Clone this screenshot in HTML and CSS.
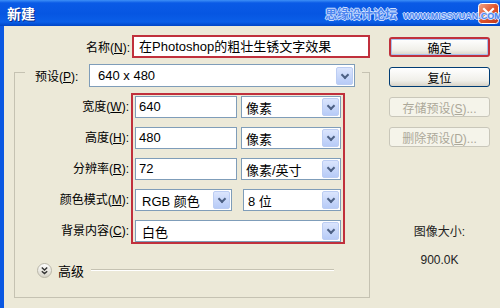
FILE: index.html
```html
<!DOCTYPE html>
<html>
<head>
	<title>新建</title>
	<meta charset="utf-8">
	<link rel="stylesheet" href="styles.css">
</head>
<body>

	<div class="window">
		<div class="titlebar">
			<span class="title">新建</span>
			<span class="close">
				<svg width="21" height="21" viewBox="0 0 21 21">
					<defs>
						<linearGradient id="cg" x1="0" y1="0" x2="1" y2="1">
							<stop offset="0" stop-color="#f0a68a"/>
							<stop offset="0.5" stop-color="#e0542c"/>
							<stop offset="1" stop-color="#c0391b"/>
						</linearGradient>
					</defs>
					<rect x="0.5" y="0.5" width="20" height="20" rx="3" fill="url(#cg)" stroke="#fff"/>
					<path d="M6 6 L15 15 M15 6 L6 15" stroke="#fff" stroke-width="2.2" stroke-linecap="square"/>
				</svg>
			</span>
			<span class="mark"><b>思缘设计论坛</b> <small>WWW.MISSYUAN.COM</small></span>
		</div>

		<div class="body">
			<div class="main">
				<div class="name-row">
					<label class="lbl">名称(<u>N</u>):</label>
					<div class="textbox name-box">在Photoshop的粗壮生锈文字效果</div>
				</div>

				<fieldset class="group">
					<legend>
						<div class="legend-inner">
							<label class="preset-lbl">预设(<u>P</u>):</label>
							<div class="combo preset"><span>640 x 480</span><i class="arrow"></i></div>
						</div>
					</legend>

					<div class="fields">
						<div class="labels">
							<label>宽度(<u>W</u>):</label>
							<label>高度(<u>H</u>):</label>
							<label>分辨率(<u>R</u>):</label>
							<label>颜色模式(<u>M</u>):</label>
							<label>背景内容(<u>C</u>):</label>
						</div>
						<div class="values">
							<div class="row">
								<div class="textbox num">640</div>
								<div class="combo unit"><span>像素</span><i class="arrow"></i></div>
							</div>
							<div class="row">
								<div class="textbox num">480</div>
								<div class="combo unit"><span>像素</span><i class="arrow"></i></div>
							</div>
							<div class="row">
								<div class="textbox num">72</div>
								<div class="combo unit"><span>像素/英寸</span><i class="arrow"></i></div>
							</div>
							<div class="row wide-gap">
								<div class="combo mode"><span>RGB 颜色</span><i class="arrow"></i></div>
								<div class="combo bits"><span>8 位</span><i class="arrow"></i></div>
							</div>
							<div class="row">
								<div class="combo full"><span>白色</span><i class="arrow"></i></div>
							</div>
						</div>
					</div>

					<div class="advanced">
						<span class="more">
							<svg width="15" height="15" viewBox="0 0 15 15">
								<defs>
									<linearGradient id="mg" x1="0" y1="0" x2="0" y2="1">
										<stop offset="0" stop-color="#ffffff"/>
										<stop offset="1" stop-color="#d6d3c6"/>
									</linearGradient>
								</defs>
								<circle cx="7.5" cy="7.5" r="7" fill="url(#mg)" stroke="#b9b6a8"/>
								<path d="M4.8 4.6 L7.5 7 L10.2 4.6 M4.8 8.2 L7.5 10.6 L10.2 8.2" fill="none" stroke="#333" stroke-width="1.4"/>
							</svg>
						</span>
						<span>高级</span>
						<div class="rule"></div>
					</div>
				</fieldset>
			</div>

			<div class="side">
				<button class="btn ok">确定</button>
				<button class="btn">复位</button>
				<button class="btn off">存储预设(<u>S</u>)...</button>
				<button class="btn off">删除预设(<u>D</u>)...</button>
				<div class="info">
					<p>图像大小:</p>
					<p>900.0K</p>
				</div>
			</div>
		</div>
	</div>

</body>
</html>
```

FILE: styles.css
```css
*{
	box-sizing: border-box;
}
html,body{
	width: 100%;
	height: 100%;
}
body{
	margin: 0px;
	background: #ECE9D8;
	font-family: "Liberation Sans", "Noto Sans CJK SC", sans-serif;
	font-size: 12px;
	color: #000;
	overflow: hidden;
}

.window{
	width: 500px;
	height: 308px;
	display: flex;
	flex-direction: column;
	background: #ECE9D8;
}

/* title bar */
.titlebar{
	height: 26px;
	flex: none;
	display: flex;
	align-items: center;
	padding-left: 7px;
	position: relative;
	background: linear-gradient(#3d8ff7 0px, #0a5ae6 3px, #0656e2 14px, #0a5fe8 22px, #0045c6 26px);
}

.title{
	color: #fff;
	font-weight: bold;
	font-size: 14px;
	font-family: "Noto Sans CJK SC", sans-serif;
	text-shadow: 1px 1px 0px #0b2c8c;
}

/* watermark drawn over the bar and the close box */
.mark{
	position: absolute;
	left: 325px;
	top: 5px;
	z-index: 2;
	color: #4d86f0;
	text-shadow: -1px 0 #cfe0ff, 1px 0 #cfe0ff, 0 -1px #cfe0ff, 0 1px #cfe0ff;
	white-space: nowrap;
}
.mark b{
	font-size: 12px;
	font-family: "Noto Sans CJK SC", sans-serif;
	font-weight: bold;
}
.mark small{
	font-size: 9px;
	font-weight: bold;
	margin-left: 3px;
}

.close{
	margin-left: auto;
	margin-right: 1px;
	width: 21px;
	height: 21px;
}
.close svg{
	display: block;
}

/* body */
.body{
	flex: 1;
	display: flex;
	border-left: 4px solid #0a58e2;
	padding: 9px 0px 0px 10px;
}

.main{
	width: 356px;
	flex: none;
}

u{
	text-decoration: underline;
	text-underline-offset: 1px;
}

.lbl{
	width: 116px;
	text-align: right;
}

.name-row{
	display: flex;
	align-items: center;
	gap: 2px;
	height: 22px;
}

.textbox{
	background: #fff;
	border: 1px solid #7F9DB9;
	font-size: 13px;
	white-space: nowrap;
	overflow: hidden;
}

.name-box{
	width: 238px;
	height: 23px;
	border: 2px solid #c0303c;
	padding-left: 5px;
	line-height: 19px;
}

/* group box */
.group{
	margin: 0px;
	padding: 0px 0px 19px 0px;
	border: 1px solid #c5c2b2;
	width: 356px;
}

.group legend{
	margin-left: 10px;
	padding: 7px 7px 0px 10px;
}

.legend-inner{
	display: flex;
	align-items: center;
	gap: 4px;
}

.preset-lbl{
	width: 50px;
	white-space: nowrap;
}

.combo{
	display: flex;
	align-items: center;
	height: 22px;
	background: #fff;
	border: 1px solid #7F9DB9;
	font-size: 13px;
	padding: 1px 1px 1px 3px;
}
.combo span{
	flex: 1;
	white-space: nowrap;
}
.arrow{
	width: 17px;
	height: 18px;
	flex: none;
	border-radius: 2px;
	border: 1px solid #bccdf3;
	background: linear-gradient(#dbe5fd, #b7cbf7);
	position: relative;
}
.arrow::after{
	content: "";
	position: absolute;
	left: 5px;
	top: 4px;
	width: 4px;
	height: 4px;
	border-right: 2px solid #4d6185;
	border-bottom: 2px solid #4d6185;
	transform: rotate(45deg);
}

.preset{
	width: 266px;
	height: 23px;
	padding-left: 8px;
}

.fields{
	display: flex;
	margin-top: 6px;
}

.labels{
	width: 116px;
	padding-top: 3px;
	display: flex;
	flex-direction: column;
	gap: 9px;
}
.labels label{
	height: 22px;
	line-height: 22px;
	text-align: right;
	padding-right: 2px;
	white-space: nowrap;
}

.values{
	width: 214px;
	border: 2px solid #c0303c;
	padding: 1px 2px 0px 2px;
	display: flex;
	flex-direction: column;
	gap: 9px;
}

.row{
	display: flex;
	gap: 4px;
	height: 22px;
}
.row.wide-gap{
	gap: 11px;
}

.num{
	width: 102px;
	height: 22px;
	line-height: 20px;
	padding-left: 3px;
}
.unit{
	width: 100px;
	padding-left: 4px;
}
.mode{
	width: 97px;
	padding-left: 6px;
}
.bits{
	width: 98px;
	padding-left: 4px;
}
.full{
	width: 206px;
	padding-left: 6px;
}

.advanced{
	display: flex;
	align-items: center;
	height: 16px;
	margin-top: 18px;
	padding-left: 22px;
	font-size: 13px;
}
.more{
	width: 15px;
	height: 15px;
	margin-right: 6px;
}
.more svg{
	display: block;
}
.rule{
	flex: 1;
	margin: 0px 35px 0px 7px;
	border-top: 1px solid #c5c2b2;
	border-bottom: 1px solid #fff;
}

/* right column */
.side{
	width: 101px;
	margin-left: 19px;
	padding-top: 2px;
	display: flex;
	flex-direction: column;
	gap: 10px;
}

.btn{
	height: 20px;
	padding: 0px;
	border: 1px solid #003C74;
	border-radius: 3px;
	background: linear-gradient(#ffffff, #f0efe9 70%, #d8d3c7);
	font-family: "Liberation Sans", "Noto Sans CJK SC", sans-serif;
	font-size: 12px;
	color: #000;
}

.btn.ok{
	border: 2px solid #c0303c;
	box-shadow: inset 0px 0px 0px 1px #a9c0ee;
}

.btn.off{
	border-color: #c9c7ba;
	background: #f5f4ea;
	color: #aca899;
}

.info{
	margin-top: 67px;
	text-align: center;
	color: #222;
}
.info p{
	margin: 0px 0px 12px 0px;
	line-height: 16px;
}
```
